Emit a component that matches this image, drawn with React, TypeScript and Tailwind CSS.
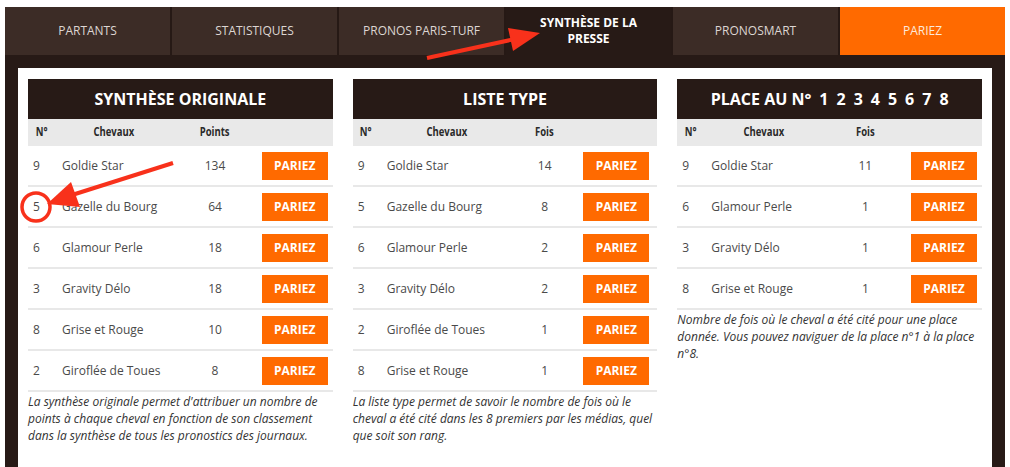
type Row = { num: number; name: string; value: number };

const tabs = [
  { label: 'PARTANTS' },
  { label: 'STATISTIQUES' },
  { label: 'PRONOS PARIS-TURF' },
  { label: 'SYNTHÈSE DE LA PRESSE', active: true },
  { label: 'PRONOSMART' },
  { label: 'PARIEZ', orange: true }
];

const tables: {
  title: string;
  valueLabel: string;
  cols: string;
  btnPad: string;
  rows: Row[];
  note: string;
}[] = [
  {
    title: 'SYNTHÈSE ORIGINALE',
    valueLabel: 'Points',
    cols: 'grid-cols-[27px_118px_84px_1fr]',
    btnPad: 'pr-[5px]',
    rows: [
      { num: 9, name: 'Goldie Star', value: 134 },
      { num: 5, name: 'Gazelle du Bourg', value: 64 },
      { num: 6, name: 'Glamour Perle', value: 18 },
      { num: 3, name: 'Gravity Délo', value: 18 },
      { num: 8, name: 'Grise et Rouge', value: 10 },
      { num: 2, name: 'Giroflée de Toues', value: 8 }
    ],
    note: "La synthèse originale permet d'attribuer un nombre de points à chaque cheval en fonction de son classement dans la synthèse de tous les pronostics des journaux."
  },
  {
    title: 'LISTE TYPE',
    valueLabel: 'Fois',
    cols: 'grid-cols-[27px_134px_62px_1fr]',
    btnPad: 'pr-[8px]',
    rows: [
      { num: 9, name: 'Goldie Star', value: 14 },
      { num: 5, name: 'Gazelle du Bourg', value: 8 },
      { num: 6, name: 'Glamour Perle', value: 2 },
      { num: 3, name: 'Gravity Délo', value: 2 },
      { num: 2, name: 'Giroflée de Toues', value: 1 },
      { num: 8, name: 'Grise et Rouge', value: 1 }
    ],
    note: 'La liste type permet de savoir le nombre de fois où le cheval a été cité dans les 8 premiers par les médias, quel que soit son rang.'
  },
  {
    title: 'PLACE AU N° 1 2 3 4 5 6 7 8',
    valueLabel: 'Fois',
    cols: 'grid-cols-[27px_120px_82px_1fr]',
    btnPad: 'pr-[5px]',
    rows: [
      { num: 9, name: 'Goldie Star', value: 11 },
      { num: 6, name: 'Glamour Perle', value: 1 },
      { num: 3, name: 'Gravity Délo', value: 1 },
      { num: 8, name: 'Grise et Rouge', value: 1 }
    ],
    note: 'Nombre de fois où le cheval a été cité pour une place donnée. Vous pouvez naviguer de la place n°1 à la place n°8.'
  }
];

function Title({ text }: { text: string }) {
  if (!text.startsWith('PLACE')) return <>{text}</>;
  // the place numbers sit a bit apart
  return (
    <>
      PLACE AU N°
      {[1, 2, 3, 4, 5, 6, 7, 8].map((n) => (
        <span key={n} className="ml-[8px]">
          {n}
        </span>
      ))}
    </>
  );
}

function HeadCell({ children }: { children: React.ReactNode }) {
  return (
    <div className="text-center">
      <span className="inline-block scale-x-[0.76]">{children}</span>
    </div>
  );
}

function ResultTable({ table }: { table: (typeof tables)[number] }) {
  return (
    <div className="min-w-0">
      <div className="flex h-[40px] items-center justify-center bg-[#271a16] text-[16px] font-bold text-white">
        <Title text={table.title} />
      </div>
      <div
        className={`grid ${table.cols} h-[27px] items-center bg-[#e9e9e9] text-[12.5px] font-bold text-[#2a2a2a]`}
      >
        <HeadCell>N°</HeadCell>
        <HeadCell>Chevaux</HeadCell>
        <HeadCell>{table.valueLabel}</HeadCell>
        <div />
      </div>
      {table.rows.map((row) => (
        <div
          key={row.name}
          className={`grid ${table.cols} h-[41px] items-center border-b-2 border-[#e8e8e8] text-[12px] text-[#4a4a4a]`}
        >
          <div className="pl-[5px]">{row.num}</div>
          <div className="pl-[7px]">{row.name}</div>
          <div className="text-center">{row.value}</div>
          <div className={`flex justify-end ${table.btnPad}`}>
            <button className="h-[28px] w-[66px] bg-[#ff6a00] text-[12px] font-bold text-white">
              PARIEZ
            </button>
          </div>
        </div>
      ))}
      <p className="mt-px text-[12px] leading-[17px] italic text-[#333]">
        {table.note}
      </p>
    </div>
  );
}

export default function App() {
  return (
    <div className="relative h-[467px] w-[1010px] overflow-hidden bg-white px-[5px] pt-[7px] font-['Open_Sans',sans-serif]">
      <nav className="grid h-[48px] grid-cols-6 gap-[2px] bg-[#261915]">
        {tabs.map((tab) => (
          <div
            key={tab.label}
            className={
              tab.active
                ? 'flex items-center justify-center bg-[#271a16] px-[30px] text-center text-[12px] leading-[16px] font-bold text-white'
                : tab.orange
                  ? 'flex items-center justify-center bg-[#ff6a00] text-[12px] text-[#fde9dc]'
                  : 'flex items-center justify-center bg-[#3c2c26] text-[12px] text-[#ddd6d2]'
            }
          >
            {tab.label}
          </div>
        ))}
      </nav>
      <div className="h-full bg-[#271a16] px-[13px] pt-[13px]">
        <div className="grid h-full grid-cols-3 gap-[20px] bg-white px-[10px] pt-[11px]">
          {tables.map((t) => (
            <ResultTable key={t.title} table={t} />
          ))}
        </div>
      </div>

      <svg
        className="pointer-events-none absolute top-0 left-0"
        width="1010"
        height="467"
        viewBox="0 0 1010 467"
      >
        <line x1="427" y1="58" x2="515" y2="39" stroke="#f8311b" strokeWidth="4" />
        <polygon points="540,33 513,51 508,28" fill="#f8311b" />
        <line x1="173" y1="163" x2="72" y2="195" stroke="#f8311b" strokeWidth="4" />
        <polygon points="47,204 80,207 71,182" fill="#f8311b" />
        <circle cx="36" cy="207" r="14" fill="none" stroke="#f8311b" strokeWidth="3.5" />
      </svg>
    </div>
  );
}
